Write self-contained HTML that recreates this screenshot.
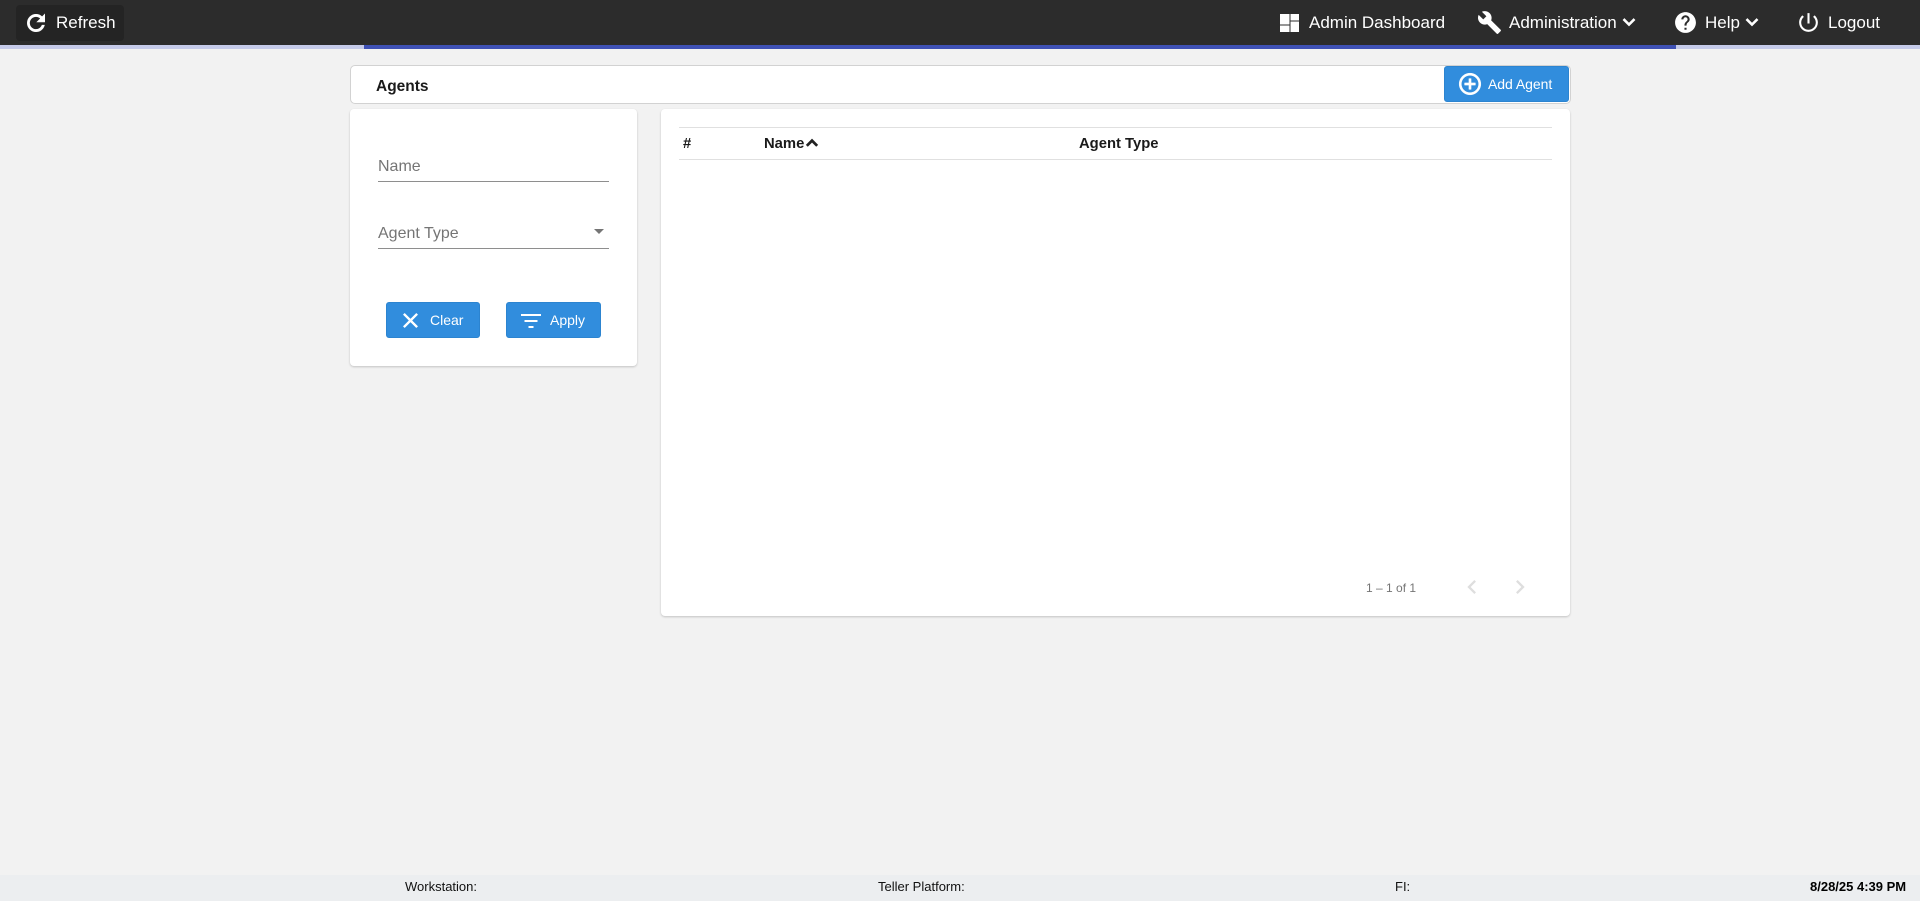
<!DOCTYPE html>
<html><head><meta charset="utf-8"><title>Agents</title>
<style>
html,body{margin:0;padding:0;width:1920px;height:901px;overflow:hidden;background:#f2f2f2;font-family:"Liberation Sans",Arial,sans-serif}
.a{position:absolute;white-space:nowrap}
svg{position:absolute;display:block}
.w{color:#fff;font-size:17px;line-height:20px;top:13px}
.btn{position:absolute;background:#318ddd;border:1px solid #2c84d0;box-sizing:border-box;border-radius:3px}
.bt{color:#fff;font-size:14px;line-height:16px}
.th{font-size:14.8px;font-weight:bold;color:#1a1a1a;line-height:16px;top:136px}
.f{font-size:13px;color:#111;line-height:16px;top:879px}
</style></head><body>
<div class="a" style="left:0;top:0;width:1920px;height:45px;background:#2c2c2c"></div>
<div class="a" style="left:0;top:45px;width:1920px;height:4px;background:#c5cae9"></div>
<div class="a" style="left:364px;top:45px;width:1312px;height:4px;background:#3f51b5"></div>

<div class="a" style="left:16px;top:5px;width:108px;height:36px;background:#242424;border-radius:4px"></div>
<svg style="left:23px;top:10px" width="26" height="26" viewBox="0 0 24 24" fill="#fff"><path d="M17.65 6.35C16.2 4.9 14.21 4 12 4c-4.42 0-7.99 3.58-7.99 8s3.57 8 7.99 8c3.73 0 6.84-2.55 7.73-6h-2.08c-.82 2.33-3.04 4-5.65 4-3.31 0-6-2.69-6-6s2.69-6 6-6c1.66 0 3.14.69 4.22 1.78L13 11h7V4l-2.35 2.35z" stroke="#fff" stroke-width=".6"/></svg>
<div class="a w" style="left:56px">Refresh</div>

<svg style="left:1280px;top:14px" width="19" height="18" viewBox="0 0 19 18" fill="#fff"><rect x="0" y="0" width="9.500" height="10.500"/><rect x="0" y="11.500" width="9.500" height="6.500"/><rect x="10.500" y="0" width="8.500" height="6.500"/><rect x="10.500" y="7.500" width="8.500" height="10.500"/></svg>
<div class="a w" style="left:1309px">Admin Dashboard</div>
<svg style="left:1477px;top:10px" width="25" height="25" viewBox="0 0 24 24" fill="#fff"><path d="M22.7 19l-9.1-9.1c.9-2.3.4-5-1.5-6.9-2-2-5-2.4-7.4-1.3L9 6 6 9 1.6 4.7C.4 7.1.9 10.1 2.9 12.1c1.9 1.9 4.6 2.4 6.9 1.5l9.1 9.1c.4.4 1 .4 1.4 0l2.3-2.3c.5-.4.5-1.1.1-1.4z"/></svg>
<div class="a w" style="left:1509px">Administration</div>
<svg style="left:1617px;top:10px" width="24" height="24" viewBox="0 0 24 24" fill="#fff"><path d="M16.59 8.59L12 13.17 7.41 8.59 6 10l6 6 6-6z" stroke="#fff" stroke-width=".6"/></svg>
<svg style="left:1673px;top:10px" width="25" height="25" viewBox="0 0 24 24" fill="#fff"><path d="M12 2C6.48 2 2 6.48 2 12s4.48 10 10 10 10-4.48 10-10S17.52 2 12 2zm1 17h-2v-2h2v2zm2.07-7.75l-.9.92C13.45 12.9 13 13.5 13 15h-2v-.5c0-1.1.45-2.1 1.17-2.83l1.24-1.26c.37-.36.59-.86.59-1.41 0-1.1-.9-2-2-2s-2 .9-2 2H8c0-2.21 1.79-4 4-4s4 1.79 4 4c0 .88-.36 1.68-.93 2.25z"/></svg>
<div class="a w" style="left:1705px">Help</div>
<svg style="left:1740px;top:10px" width="24" height="24" viewBox="0 0 24 24" fill="#fff"><path d="M16.59 8.59L12 13.17 7.41 8.59 6 10l6 6 6-6z" stroke="#fff" stroke-width=".6"/></svg>
<svg style="left:1796px;top:10px" width="25" height="25" viewBox="0 0 24 24" fill="#fff"><path d="M13 3h-2v10h2V3zm4.83 2.17l-1.42 1.42C17.99 7.86 19 9.81 19 12c0 3.87-3.13 7-7 7s-7-3.13-7-7c0-2.19 1.01-4.14 2.58-5.42L6.17 5.17C4.23 6.82 3 9.26 3 12c0 4.97 4.03 9 9 9s9-4.03 9-9c0-2.74-1.23-5.18-3.17-6.83z"/></svg>
<div class="a w" style="left:1828px">Logout</div>

<div class="a" style="left:350px;top:65px;width:1221px;height:39px;box-sizing:border-box;background:#fff;border:1px solid #d2d2d2;border-radius:5px"></div>
<div class="a" style="left:376px;top:78px;font-size:15.5px;font-weight:bold;color:#1a1a1a;line-height:18px">Agents</div>
<div class="btn" style="left:1444px;top:66px;width:125px;height:36px"></div>
<svg style="left:1457px;top:71px" width="26" height="26" viewBox="0 0 24 24" fill="#fff"><path d="M13 7h-2v4H7v2h4v4h2v-4h4v-2h-4V7zm-1-5C6.48 2 2 6.48 2 12s4.48 10 10 10 10-4.48 10-10S17.52 2 12 2zm0 18c-4.41 0-8-3.59-8-8s3.59-8 8-8 8 3.59 8 8-3.59 8-8 8z" stroke="#fff" stroke-width=".4"/></svg>
<div class="a bt" style="left:1488px;top:76px;letter-spacing:-.05px">Add Agent</div>

<div class="a" style="left:350px;top:109px;width:287px;height:257px;background:#fff;border-radius:4px;box-shadow:0 1px 2px rgba(0,0,0,.2)"></div>
<div class="a" style="left:378px;top:158px;font-size:16px;color:#757575;line-height:18px">Name</div>
<div class="a" style="left:378px;top:181px;width:231px;height:1px;background:#8e8e8e"></div>
<div class="a" style="left:378px;top:225px;font-size:16px;color:#757575;line-height:18px">Agent Type</div>
<div class="a" style="left:594px;top:229px;width:0;height:0;border-left:5px solid transparent;border-right:5px solid transparent;border-top:5px solid #757575"></div>
<div class="a" style="left:378px;top:248px;width:231px;height:1px;background:#8e8e8e"></div>

<div class="btn" style="left:386px;top:302px;width:94px;height:36px"></div>
<svg style="left:398px;top:308px" width="25" height="25" viewBox="0 0 24 24" fill="#fff"><path d="M19 6.41L17.59 5 12 10.59 6.41 5 5 6.41 10.59 12 5 17.59 6.41 19 12 13.41 17.59 19 19 17.59 13.41 12z" stroke="#fff" stroke-width=".4"/></svg>
<div class="a bt" style="left:430px;top:312px">Clear</div>
<div class="btn" style="left:506px;top:302px;width:95px;height:36px"></div>
<svg style="left:519px;top:306px" width="24" height="28" viewBox="0 0 24 28" fill="#fff"><rect x="2" y="8" width="20" height="2"/><rect x="5.500" y="14" width="13" height="2"/><rect x="9.500" y="20" width="5" height="2"/></svg>
<div class="a bt" style="left:550px;top:312px">Apply</div>

<div class="a" style="left:661px;top:109px;width:909px;height:507px;background:#fff;border-radius:4px;box-shadow:0 1px 2px rgba(0,0,0,.2)"></div>
<div class="a" style="left:679px;top:127px;width:873px;height:1px;background:#e0e0e0"></div>
<div class="a" style="left:679px;top:159px;width:873px;height:1px;background:#e0e0e0"></div>
<div class="a th" style="left:683px">#</div>
<div class="a th" style="left:764px">Name</div>
<svg style="left:801px;top:132px" width="22" height="22" viewBox="0 0 24 24" fill="#222"><path d="M12 8l-6 6 1.41 1.41L12 10.83l4.59 4.58L18 14z" stroke="#222" stroke-width="1"/></svg>
<div class="a th" style="left:1079px">Agent Type</div>
<div class="a" style="left:1366px;top:581px;font-size:12px;color:#757575;line-height:14px">1 – 1 of 1</div>
<svg style="left:1458px;top:573px" width="28" height="28" viewBox="0 0 24 24" fill="#dedede"><path d="M15.41 7.41L14 6l-6 6 6 6 1.41-1.41L10.83 12z"/></svg>
<svg style="left:1506px;top:573px" width="28" height="28" viewBox="0 0 24 24" fill="#dedede"><path d="M10 6L8.59 7.41 13.17 12l-4.58 4.59L10 18l6-6z"/></svg>

<div class="a" style="left:0;top:875px;width:1920px;height:26px;background:#eceef0"></div>
<div class="a f" style="left:405px">Workstation:</div>
<div class="a f" style="left:878px">Teller Platform:</div>
<div class="a f" style="left:1395px">FI:</div>
<div class="a f" style="left:1810px;font-weight:bold;color:#000">8/28/25 4:39 PM</div>
</body></html>
